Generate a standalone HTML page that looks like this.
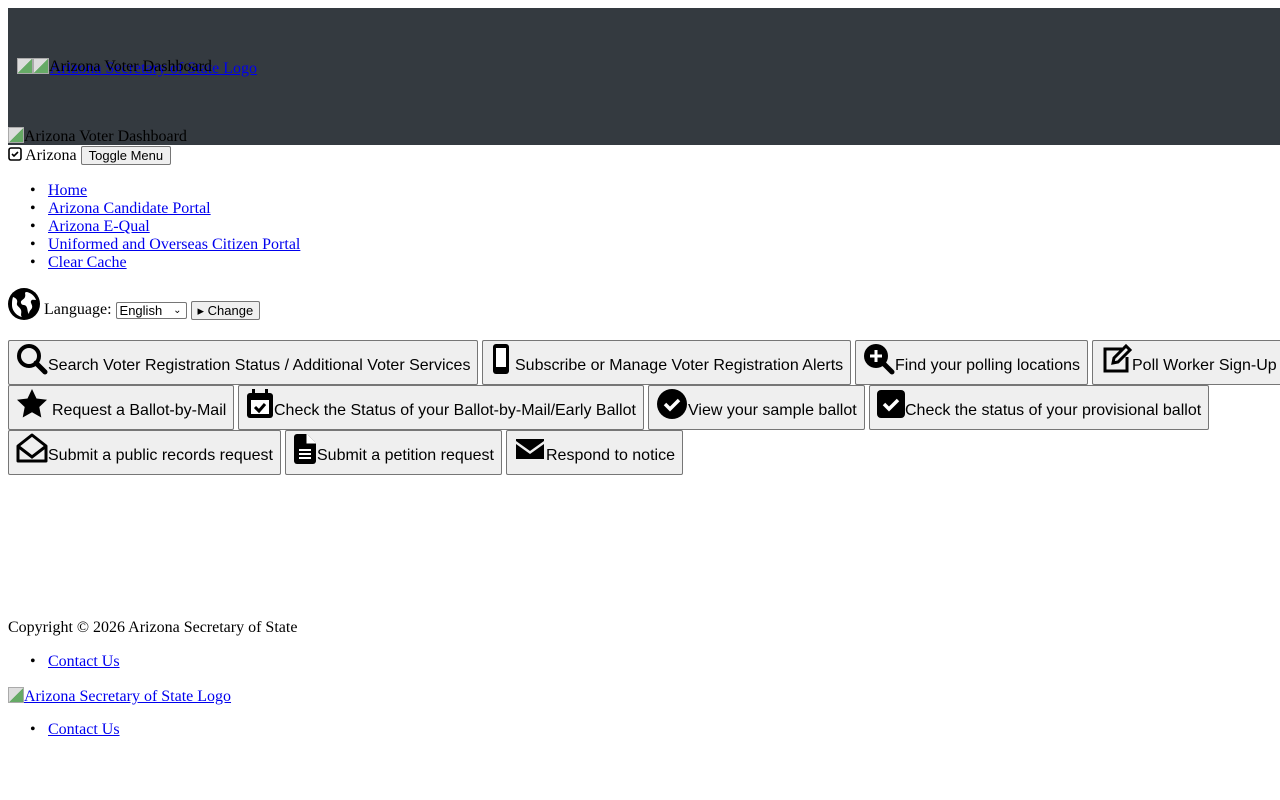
<!DOCTYPE html>
<html><head><meta charset="utf-8"><style>
body{margin:0;font-family:"Liberation Serif",serif;font-size:16px;color:#000;background:#fff;width:1280px;height:800px;overflow:hidden;position:relative}
.a{position:absolute;white-space:nowrap}
a{color:#00e;text-decoration:underline}
.hdr{position:absolute;left:8px;top:8px;width:1272px;height:137px;background:#343a40}
.btn{position:absolute;height:45px;box-sizing:border-box;border:1px solid #767676;border-radius:2px;background:#efefef;font-family:"Liberation Sans",sans-serif;font-size:16px;white-space:nowrap;overflow:hidden}
.btn svg{position:absolute;left:7px;top:2px;width:32px;height:32px}
.btn span{position:absolute;left:39px;top:16px}
.sb{display:inline-block;border:1px solid #767676;border-radius:2px;background:#efefef;font-family:"Liberation Sans",sans-serif;font-size:13px;padding:1px 6px;line-height:15px}
.img{display:inline-block;width:16px;height:16px;vertical-align:-2px;background:linear-gradient(135deg,#ddd 50%,#6a6 50%);border:1px solid #aaa;box-sizing:border-box}
.li{position:absolute;left:30px;white-space:nowrap}
.li b{position:absolute;left:0;font-weight:normal}
.li a{position:absolute;left:18px}
</style></head><body>
<div class="hdr"></div>
<div class="a" style="left:17px;top:58px"><span class="img"></span></div>
<div class="a" style="left:33px;top:58px"><span class="img"></span></div>
<div class="a" style="left:50px;top:60px"><a>Arizona Secretary of State Logo</a></div>
<div class="a" style="left:49px;top:58px">Arizona Voter Dashboard</div>
<div class="a" style="left:8px;top:127px"><span class="img"></span>Arizona Voter Dashboard</div>
<div class="a" style="left:8px;top:146px"><svg width="14" height="14" viewBox="0 0 14 14" style="vertical-align:-1px"><rect x="1" y="1" width="12" height="12" rx="2" fill="none" stroke="#000" stroke-width="1.6"/><path d="M4 7l2 2 4-4" fill="none" stroke="#000" stroke-width="1.6"/></svg> Arizona <span class="sb" style="padding:1px 7px">Toggle Menu</span></div>
<div class="li" style="top:182px"><b>•</b><a>Home</a></div>
<div class="li" style="top:200px"><b>•</b><a>Arizona Candidate Portal</a></div>
<div class="li" style="top:218px"><b>•</b><a>Arizona E-Qual</a></div>
<div class="li" style="top:236px"><b>•</b><a>Uniformed and Overseas Citizen Portal</a></div>
<div class="li" style="top:254px"><b>•</b><a>Clear Cache</a></div>
<div class="a" style="left:8px;top:288px"><svg width="32" height="32" viewBox="0 0 32 32" style="vertical-align:-6px"><circle cx="16" cy="16" r="16"/><path d="M5 9c3 1 5 3 4 6s3 4 4 7-1 5 1 7c-5-1-10-6-10-12 0-3 0-5 1-8zM18 4c4 0 9 4 10 8-2 0-4-1-5 1s2 4 1 7c-1 2-3 3-3 6-2-2-1-6-3-8s-4 0-5-3 3-3 4-6-1-4 1-5z" fill="#fff"/></svg> Language: <span class="sb" style="background:#fff;padding:0 3px;width:63px;position:relative;top:1px">English<span style="position:absolute;right:4px;font-size:10px">&#8964;</span></span> <span class="sb" style="position:relative;top:1px">&#9656; Change</span></div>

<div class="btn" style="left:8px;top:340px;width:470px"><svg viewBox="0 0 32 32"><circle cx="13" cy="13" r="10" fill="none" stroke="#000" stroke-width="4"/><path d="M20 20l9 9" stroke="#000" stroke-width="5" stroke-linecap="round"/></svg><span>Search Voter Registration Status / Additional Voter Services</span></div>
<div class="btn" style="left:482px;top:340px;width:369px"><svg viewBox="0 0 32 32" style="left:3px"><rect x="7" y="1" width="16" height="30" rx="3"/><rect x="10" y="5" width="10" height="19" fill="#fff"/></svg><span style="left:32px">Subscribe or Manage Voter Registration Alerts</span></div>
<div class="btn" style="left:855px;top:340px;width:233px"><svg viewBox="0 0 32 32"><circle cx="13" cy="13" r="12"/><path d="M20 20l9 9" stroke="#000" stroke-width="5" stroke-linecap="round"/><path d="M13 7v12M7 13h12" stroke="#fff" stroke-width="3"/></svg><span>Find your polling locations</span></div>
<div class="btn" style="left:1092px;top:340px;width:200px"><svg viewBox="0 0 32 32"><path d="M22 6H5v22h22V14" fill="none" stroke="#000" stroke-width="3"/><path d="M13 20l1-5L26 3l4 4-12 12z" fill="none" stroke="#000" stroke-width="3"/></svg><span>Poll Worker Sign-Up</span></div>

<div class="btn" style="left:8px;top:385px;width:226px"><svg viewBox="0 0 32 32"><path d="M16 1l4.5 9.5 10.5 1.3-7.7 7.2 2 10.5L16 24.3 6.7 29.5l2-10.5L1 11.8l10.5-1.3z"/></svg><span style="left:43px">Request a Ballot-by-Mail</span></div>
<div class="btn" style="left:238px;top:385px;width:406px"><svg viewBox="0 0 32 32" style="left:5px"><rect x="3" y="5" width="26" height="25" rx="3"/><rect x="7" y="12" width="18" height="14" fill="#fff"/><rect x="8" y="1" width="3" height="6"/><rect x="21" y="1" width="3" height="6"/><path d="M11 19l4 4 6-7" fill="none" stroke="#000" stroke-width="3"/></svg><span style="left:35px">Check the Status of your Ballot-by-Mail/Early Ballot</span></div>
<div class="btn" style="left:648px;top:385px;width:217px"><svg viewBox="0 0 32 32"><circle cx="16" cy="16" r="15"/><path d="M9 16l5 5 9-9" fill="none" stroke="#fff" stroke-width="3.5"/></svg><span>View your sample ballot</span></div>
<div class="btn" style="left:869px;top:385px;width:340px"><svg viewBox="0 0 32 32" style="left:5px"><rect x="2" y="2" width="28" height="28" rx="4"/><path d="M9 16l5 5 9-9" fill="none" stroke="#fff" stroke-width="3.5"/></svg><span style="left:35px">Check the status of your provisional ballot</span></div>

<div class="btn" style="left:8px;top:430px;width:273px"><svg viewBox="0 0 32 32"><path d="M2 13L16 2l14 11v15H2z" fill="none" stroke="#000" stroke-width="3" stroke-linejoin="round"/><path d="M3 14l13 10 13-10" fill="none" stroke="#000" stroke-width="3"/></svg><span>Submit a public records request</span></div>
<div class="btn" style="left:285px;top:430px;width:217px"><svg viewBox="0 0 32 32" style="left:3px"><path d="M8 1h10l9 9v18a3 3 0 0 1-3 3H8a3 3 0 0 1-3-3V4a3 3 0 0 1 3-3z"/><path d="M18 1v9h9" fill="#fff" stroke="#fff"/><path d="M10 17h12M10 21h12M10 25h12" stroke="#fff" stroke-width="2"/></svg><span style="left:31px">Submit a petition request</span></div>
<div class="btn" style="left:506px;top:430px;width:177px"><svg viewBox="0 0 32 32"><path d="M2 6h28v2L16 18 2 8z"/><path d="M2 11l14 10 14-10v15H2z"/></svg><span>Respond to notice</span></div>

<div class="a" style="left:8px;top:619px">Copyright © 2026 Arizona Secretary of State</div>
<div class="li" style="top:653px"><b>•</b><a>Contact Us</a></div>
<div class="a" style="left:8px;top:687px"><a><span class="img"></span>Arizona Secretary of State Logo</a></div>
<div class="li" style="top:721px"><b>•</b><a>Contact Us</a></div>
</body></html>
